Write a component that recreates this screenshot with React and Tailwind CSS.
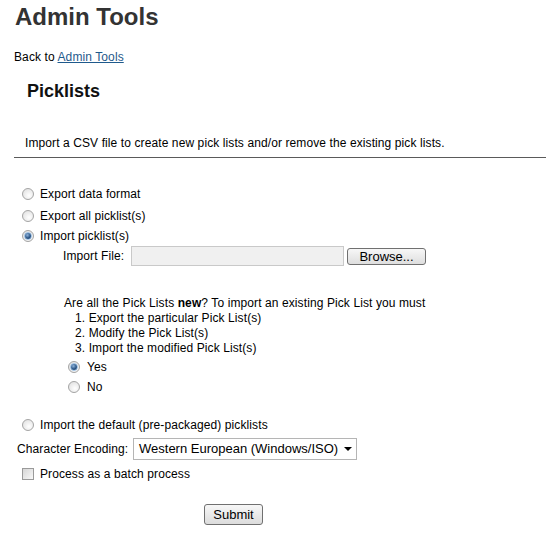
import { useState } from 'react'

const Radio = ({ checked, onClick }) => (
	<span
		onClick={onClick}
		className="relative inline-flex items-center justify-center w-[12px] h-[12px] shrink-0 rounded-full border border-[#a4a4a4] bg-[radial-gradient(circle_at_60%_65%,#ffffff,#dcdcdc)]"
	>
		{checked && (
			<span className="w-[8px] h-[8px] rounded-full bg-[radial-gradient(circle_at_40%_35%,#8fb4dc,#2a5484_55%,#1a3557)] border border-[#9cc0e4]" />
		)}
	</span>
)

const Checkbox = () => (
	<span className="inline-block w-[12px] h-[12px] shrink-0 border border-[#9a9a9a] bg-[linear-gradient(135deg,#d6d6d6,#f8f8f8)]" />
)

const App = () => {
	const [mode, setMode] = useState('import')
	const [isNew, setIsNew] = useState('yes')

	return (
		<div className="w-[546px] h-[540px] bg-white overflow-hidden text-[12px] tracking-[0.1px] text-black font-['Liberation_Sans',Arial,sans-serif]">
			<h1 className="pl-[15px] pt-[3px] text-[24px] leading-[28px] tracking-normal font-bold text-[#333]">Admin Tools</h1>

			<div className="pl-[14px] mt-[19px] leading-[14px]">
				Back to <a href="#" className="text-[#1f5a8c] underline">Admin Tools</a>
			</div>

			<h2 className="pl-[27px] mt-[16px] text-[18px] leading-[22px] tracking-normal font-bold text-[#111]">Picklists</h2>

			<p className="pl-[25px] mt-[34px] leading-[14px]">
				Import a CSV file to create new pick lists and/or remove the existing pick lists.
			</p>
			<div className="ml-[14px] mt-[7px] h-px bg-[#5a5a5a]" />

			{/* options */}
			<div className="mt-[25px]">
				<div className="flex items-center gap-[6px] pl-[22px] h-[22px]">
					<Radio checked={mode === 'format'} onClick={() => setMode('format')} />
					<span>Export data format</span>
				</div>
				<div className="flex items-center gap-[6px] pl-[22px] h-[21px]">
					<Radio checked={mode === 'export'} onClick={() => setMode('export')} />
					<span>Export all picklist(s)</span>
				</div>
				<div className="flex items-center gap-[6px] pl-[22px] h-[20px]">
					<Radio checked={mode === 'import'} onClick={() => setMode('import')} />
					<span>Import picklist(s)</span>
				</div>

				<div className="flex items-center pl-[63px] h-[20px]">
					<span className="w-[68px]">Import File:</span>
					<div className="w-[213px] h-[20px] bg-[#f0f0f0] border border-[#c9c9c9]" />
					<button className="ml-[3px] w-[79px] h-[17px] rounded-[3px] border border-[#707070] bg-[linear-gradient(#f7f7f7,#dedede)] text-[13px] leading-[15px] tracking-normal">
						Browse...
					</button>
				</div>

				<div className="pl-[64px] mt-[30px] leading-[15px]">
					<p>Are all the Pick Lists <b>new</b>? To import an existing Pick List you must</p>
					<ol className="pl-[11px]">
						<li>1. Export the particular Pick List(s)</li>
						<li>2. Modify the Pick List(s)</li>
						<li>3. Import the modified Pick List(s)</li>
					</ol>
				</div>
				<div className="mt-px">
					<div className="flex items-center gap-[7px] pl-[68px] h-[20px]">
						<Radio checked={isNew === 'yes'} onClick={() => setIsNew('yes')} />
						<span>Yes</span>
					</div>
					<div className="flex items-center gap-[7px] pl-[68px] h-[20px]">
						<Radio checked={isNew === 'no'} onClick={() => setIsNew('no')} />
						<span>No</span>
					</div>
				</div>

				<div className="flex items-center gap-[6px] pl-[22px] h-[20px] mt-[18px]">
					<Radio checked={mode === 'default'} onClick={() => setMode('default')} />
					<span>Import the default (pre-packaged) picklists</span>
				</div>

				<div className="flex items-center pl-[17px] h-[22px] mt-[3px]">
					<span className="w-[116px]">Character Encoding:</span>
					<div className="flex items-center justify-between w-[224px] h-[22px] border border-[#b5b5b5] bg-white pl-[5px] pr-[4px] text-[13px] tracking-normal">
						<span>Western European (Windows/ISO)</span>
						<span className="w-0 h-0 border-l-[4px] border-r-[4px] border-t-[4px] border-l-transparent border-r-transparent border-t-black" />
					</div>
				</div>

				<div className="flex items-center gap-[6px] pl-[22px] h-[20px] mt-[4px]">
					<Checkbox />
					<span>Process as a batch process</span>
				</div>

				<div className="pl-[204px] mt-[20px]">
					<button className="w-[59px] h-[21px] rounded-[3px] border border-[#707070] bg-[linear-gradient(#f7f7f7,#dcdcdc)] text-[13px] leading-[17px] tracking-normal">
						Submit
					</button>
				</div>
			</div>
		</div>
	)
}

export default App
